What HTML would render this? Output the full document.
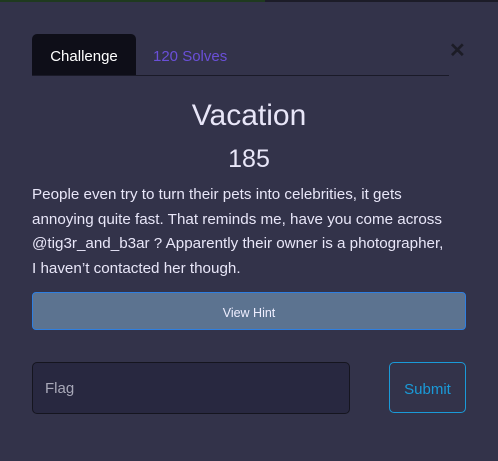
<!DOCTYPE html>
<html><head><style>
body{margin:0;width:498px;height:461px;background:#33334a;font-family:"Liberation Sans",sans-serif;position:relative;overflow:hidden;color:#e8e6f8}
.top{position:absolute;left:0;top:0;width:265px;height:2px;background:#1f3a1f}
.top2{position:absolute;left:265px;top:0;width:233px;height:2px;background:#1c1c28}
.tab{position:absolute;left:32px;top:34px;width:104px;height:41px;background:#0e0e18;border-radius:5px 5px 0 0;font-size:15px;color:#fff;text-align:center;line-height:45px}
.solves{position:absolute;left:153px;top:34px;line-height:45px;font-size:15px;color:#6a4fd8}
.line{position:absolute;left:32px;top:75px;width:417px;height:1px;background:#1a1a28}
.x{position:absolute;left:449px;top:38px;font-size:20px;font-weight:bold;color:#1c1c26}
.title{position:absolute;left:0;width:498px;text-align:center;top:99px;font-size:30px}
.pts{position:absolute;left:0;width:498px;text-align:center;top:145px;font-size:25px}
.desc{position:absolute;left:32px;top:183px;font-size:15.2px;line-height:24.5px;white-space:nowrap}
.hint{position:absolute;left:32px;top:292px;width:432px;height:36px;background:#5c7390;border:1px solid #2f7fe0;border-radius:4px;text-align:center;line-height:40px;font-size:12.5px;color:#eef}
.flag{position:absolute;left:32px;top:362px;width:316px;height:50px;background:#282840;border:1px solid #15151f;border-radius:5px;font-size:15px;color:#a8a8b8;line-height:52px;text-indent:12px}
.sub{position:absolute;left:389px;top:362px;width:75px;height:49px;border:1px solid #1a9ad8;border-radius:5px;font-size:15px;color:#1a9ad8;text-align:center;line-height:53px}
</style></head><body>
<div class="top"></div><div class="top2"></div>
<div class="tab">Challenge</div>
<div class="solves">120 Solves</div>
<div class="line"></div>
<div class="x">✕</div>
<div class="title">Vacation</div>
<div class="pts">185</div>
<div class="desc">People even try to turn their pets into celebrities, it gets<br>annoying quite fast. That reminds me, have you come across<br>@tig3r_and_b3ar ? Apparently their owner is a photographer,<br>I haven’t contacted her though.</div>
<div class="hint">View Hint</div>
<div class="flag">Flag</div>
<div class="sub">Submit</div>
</body></html>
